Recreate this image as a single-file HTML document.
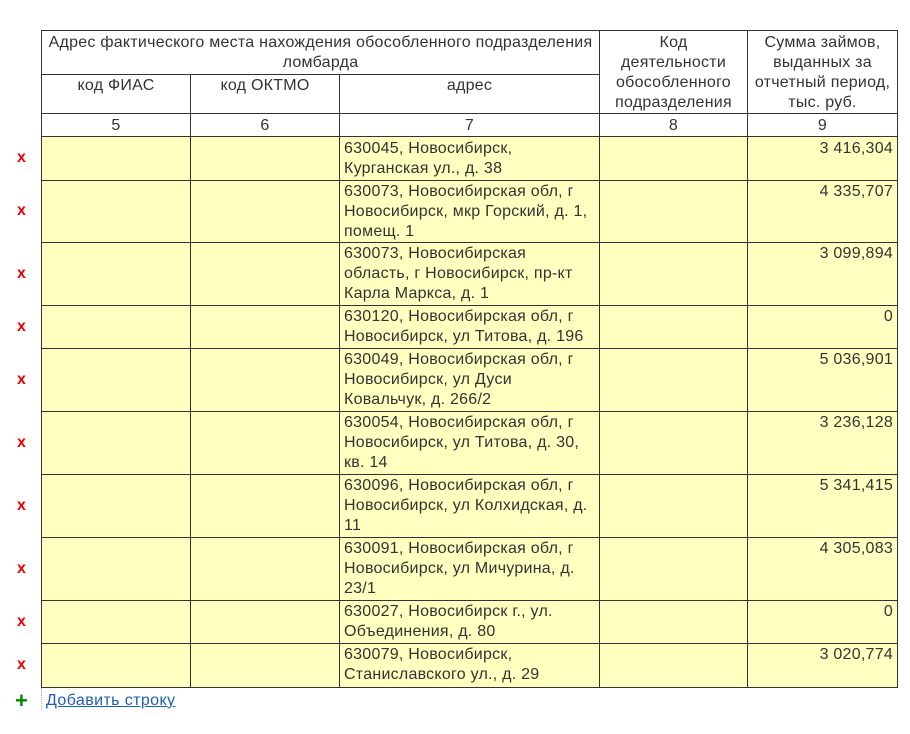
<!DOCTYPE html>
<html><head><meta charset="utf-8"><style>
body{margin:0;background:#fff;font-family:"Liberation Sans",Arial,sans-serif;font-size:16px;letter-spacing:0.25px;color:#333;}
table{position:absolute;left:41px;top:30px;border-collapse:collapse;table-layout:fixed;}
td{border:1px solid #333;padding:0 4px;vertical-align:top;line-height:20px;overflow:hidden;}
.h{text-align:center;}
.y td{background:#ffffc0;}
.r{text-align:right;}
.x{position:absolute;left:17px;color:#e00;font-weight:bold;font-size:16px;}
.add{position:absolute;left:46px;top:692px;color:#1a5fb4;text-decoration:underline;letter-spacing:0.4px;}
.plus{position:absolute;left:15px;top:688px;color:#080;font-weight:bold;font-size:22px;}
.dot{position:absolute;left:41px;top:688px;height:22px;border-left:1px dotted #aaa;}
</style></head><body>
<table>
<colgroup><col style="width:149px"><col style="width:149px"><col style="width:260px"><col style="width:148px"><col style="width:150px"></colgroup>
<tr style="height:44px"><td class="h" colspan="3" style="padding-top:2px">Адрес фактического места нахождения обособленного подразделения ломбарда</td><td class="h" rowspan="2" style="padding-top:2px">Код<br>деятельности<br>обособленного<br>подразделения</td><td class="h" rowspan="2" style="padding-top:2px">Сумма займов, выданных за отчетный период, тыс. руб.</td></tr>
<tr style="height:39px"><td class="h" style="padding-top:1px">код ФИАС</td><td class="h" style="padding-top:1px">код ОКТМО</td><td class="h" style="padding-top:1px">адрес</td></tr>
<tr style="height:23px"><td class="h" style="padding-top:2px">5</td><td class="h" style="padding-top:2px">6</td><td class="h" style="padding-top:2px">7</td><td class="h" style="padding-top:2px">8</td><td class="h" style="padding-top:2px">9</td></tr>
<tr class="y" style="height:44px"><td></td><td></td><td style="padding-top:2px">630045, Новосибирск, Курганская ул., д. 38</td><td></td><td class="r" style="padding-top:2px">3 416,304</td></tr>
<tr class="y" style="height:62px"><td></td><td></td><td style="padding-top:1px">630073, Новосибирская обл, г Новосибирск, мкр Горский, д. 1, помещ. 1</td><td></td><td class="r" style="padding-top:1px">4 335,707</td></tr>
<tr class="y" style="height:63px"><td></td><td></td><td style="padding-top:1px">630073, Новосибирская область, г Новосибирск, пр-кт Карла Маркса, д. 1</td><td></td><td class="r" style="padding-top:1px">3 099,894</td></tr>
<tr class="y" style="height:43px"><td></td><td></td><td style="padding-top:1px">630120, Новосибирская обл, г Новосибирск, ул Титова, д. 196</td><td></td><td class="r" style="padding-top:1px">0</td></tr>
<tr class="y" style="height:63px"><td></td><td></td><td style="padding-top:1px">630049, Новосибирская обл, г Новосибирск, ул Дуси Ковальчук, д. 266/2</td><td></td><td class="r" style="padding-top:1px">5 036,901</td></tr>
<tr class="y" style="height:63px"><td></td><td></td><td style="padding-top:1px">630054, Новосибирская обл, г Новосибирск, ул Титова, д. 30, кв. 14</td><td></td><td class="r" style="padding-top:1px">3 236,128</td></tr>
<tr class="y" style="height:63px"><td></td><td></td><td style="padding-top:1px">630096, Новосибирская обл, г Новосибирск, ул Колхидская, д. 11</td><td></td><td class="r" style="padding-top:1px">5 341,415</td></tr>
<tr class="y" style="height:63px"><td></td><td></td><td style="padding-top:1px">630091, Новосибирская обл, г Новосибирск, ул Мичурина, д. 23/1</td><td></td><td class="r" style="padding-top:1px">4 305,083</td></tr>
<tr class="y" style="height:43px"><td></td><td></td><td style="padding-top:1px">630027, Новосибирск г., ул. Объединения, д. 80</td><td></td><td class="r" style="padding-top:1px">0</td></tr>
<tr class="y" style="height:44px"><td></td><td></td><td style="padding-top:1px">630079, Новосибирск, Станиславского ул., д. 29</td><td></td><td class="r" style="padding-top:1px">3 020,774</td></tr>
</table>
<div class="x" style="top:149px">x</div>
<div class="x" style="top:202px">x</div>
<div class="x" style="top:265px">x</div>
<div class="x" style="top:318px">x</div>
<div class="x" style="top:371px">x</div>
<div class="x" style="top:434px">x</div>
<div class="x" style="top:497px">x</div>
<div class="x" style="top:560px">x</div>
<div class="x" style="top:613px">x</div>
<div class="x" style="top:656px">x</div>
<div class="plus">+</div>
<div class="dot"></div>
<div class="add">Добавить строку</div>
</body></html>
